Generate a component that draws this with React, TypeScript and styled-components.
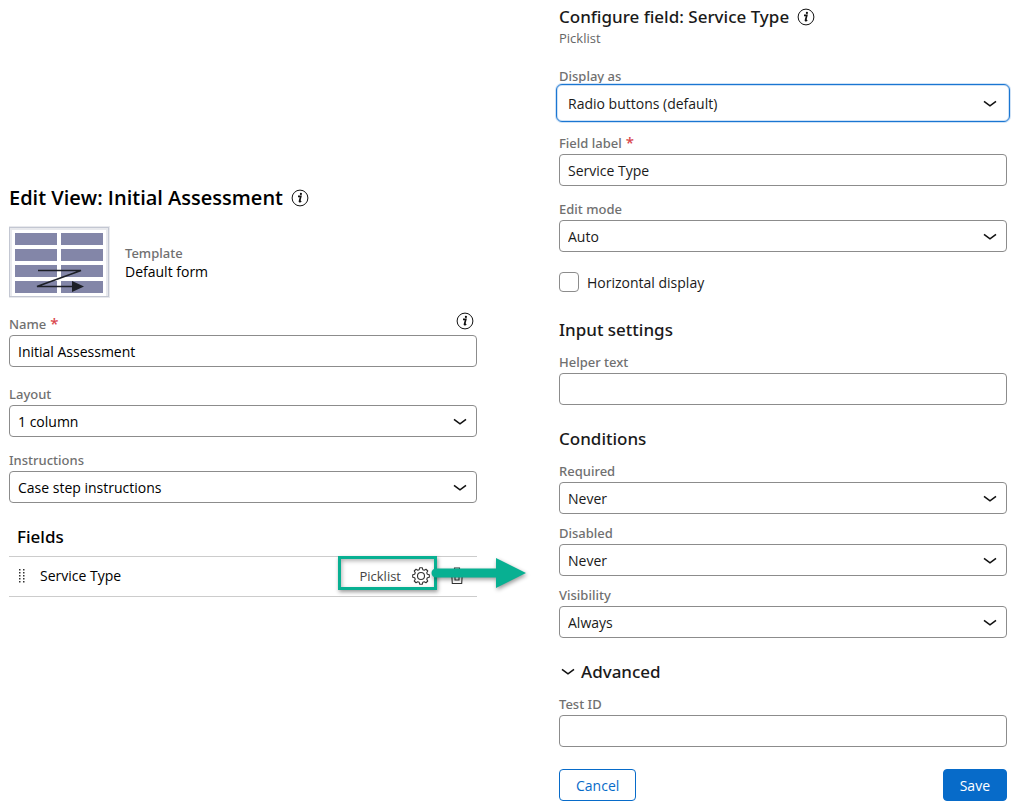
import React, { useId } from "react";
import styled, { createGlobalStyle, css } from "styled-components";

const GlobalStyle = createGlobalStyle`
  *, *::before, *::after { box-sizing: border-box; }
  body {
    margin: 0;
    background: #fff;
    color: #000;
    font-family: "Open Sans", "Noto Sans", sans-serif;
    font-size: 14px;
    line-height: 20px;
  }
  button, input, select { font: inherit; color: inherit; }
  h1, h2, p, ul { margin: 0; padding: 0; }
`;

const Page = styled.main`
  display: grid;
  grid-template-columns: minmax(0, 468fr) minmax(0, 448fr);
  column-gap: 82px;
  align-items: start;
  padding: 5px 11px 5px 9px;
`;

const ViewEditor = styled.section`
  display: flex;
  flex-direction: column;
  padding-top: 180px;
`;

const FieldConfig = styled.form`
  display: flex;
  flex-direction: column;
  color: #1a1a1a;
`;

const TitleRow = styled.div`
  display: flex;
  align-items: center;
  gap: 8px;
`;

const ViewTitle = styled.h1`
  font-size: 20px;
  line-height: 26px;
  font-weight: 600;
`;

const Heading = styled.h2`
  font-family: "Noto Sans", "Open Sans", sans-serif;
  font-size: 17px;
  line-height: 24px;
  font-weight: 500;
`;

const InfoButton = styled.button`
  display: flex;
  padding: 0;
  border: 0;
  background: none;
  color: #111;
`;

const Subtitle = styled.p`
  font-size: 13px;
  line-height: 18px;
  color: #666;
  margin-bottom: 20px;
`;

const Stack = styled.div<{ $gap: number; $top?: number }>`
  display: flex;
  flex-direction: column;
  gap: ${(p) => p.$gap}px;
  margin-top: ${(p) => p.$top ?? 0}px;
`;

const FieldBox = styled.div`
  display: flex;
  flex-direction: column;
  gap: 2px;
`;

const LabelRow = styled.div`
  display: flex;
  align-items: flex-end;
  justify-content: space-between;
  height: 18px;
  padding-right: 3px;

  ${InfoButton} {
    padding-bottom: 3px;
  }
`;

const Label = styled.label`
  font-family: "Noto Sans", "Open Sans", sans-serif;
  font-size: 13px;
  line-height: 18px;
  font-weight: 500;
  color: #707070;
`;

const Required = styled.span`
  font-size: 15px;
  line-height: 1;
  color: #d9464c;
`;

const control = css`
  width: 100%;
  height: 32px;
  padding: 0 8px;
  border: 1px solid #8c8c8c;
  border-radius: 4px;
  background: #fff;
  outline: none;
`;

const TextInput = styled.input`
  ${control}
`;

const SelectWrap = styled.div`
  position: relative;
`;

const Select = styled.select<{ $active?: boolean }>`
  ${control}
  display: block;
  appearance: none;
  padding-top: 2px;
  ${(p) =>
    p.$active &&
    css`
      width: calc(100% + 6px);
      height: 38px;
      margin: -3px;
      padding: 2px 11px 0;
      border-color: #1a76d2;
      border-radius: 6px;
      box-shadow: 0 0 0 1px #cfe2f6, inset 0 0 0 1px #cfe2f6;
    `}
`;

const SelectArrow = styled.span`
  position: absolute;
  right: 10px;
  top: 2px;
  bottom: 0;
  display: flex;
  align-items: center;
  pointer-events: none;
`;

const TemplateRow = styled.div`
  display: flex;
  align-items: center;
  gap: 15px;
  margin-top: 15px;
`;

const TemplateText = styled.div`
  padding-top: 2px;
`;

const TemplateLabel = styled.p`
  font-family: "Noto Sans", "Open Sans", sans-serif;
  font-size: 13px;
  line-height: 18px;
  font-weight: 500;
  color: #707070;
`;

const FieldsHeading = styled(Heading)`
  padding-left: 8px;
  margin: 22px 0 7px;
`;

const FieldList = styled.ul`
  list-style: none;
  border-top: 1px solid #ccc;
`;

const FieldRow = styled.li`
  position: relative;
  display: flex;
  align-items: center;
  height: 40px;
  padding: 0 12px 1px 10px;
  border-bottom: 1px solid #ccc;
`;

const FieldName = styled.span`
  flex: 1;
  padding-left: 15px;
`;

const FieldKind = styled.span`
  font-size: 13px;
  color: #444;
`;

const IconButton = styled.button<{ $left: number }>`
  display: flex;
  padding: 0;
  margin-left: ${(p) => p.$left}px;
  border: 0;
  background: none;
  color: #333;
`;

const Highlight = styled.div`
  position: absolute;
  right: 40px;
  top: -1px;
  width: 99px;
  height: 34px;
  border: 3px solid #08b092;
  box-shadow: 1px 2px 4px rgba(0, 0, 0, 0.4), inset 1px 2px 4px rgba(0, 0, 0, 0.3);
`;

const Arrow = styled.svg`
  position: absolute;
  right: -49px;
  top: -1px;
  filter: drop-shadow(1px 2px 2px rgba(0, 0, 0, 0.4));
`;

const CheckRow = styled.label`
  display: flex;
  align-items: center;
  gap: 8px;
  margin-top: 20px;
`;

const CheckText = styled.span`
  height: 20px;
  line-height: 22px;
`;

const Checkbox = styled.input`
  appearance: none;
  width: 20px;
  height: 20px;
  margin: 0;
  border: 1px solid #8c8c8c;
  border-radius: 4px;
  background: #fff;
`;

const Disclosure = styled.button`
  display: flex;
  align-items: center;
  gap: 6px;
  padding: 0 0 0 2px;
  border: 0;
  background: none;
`;

const Actions = styled.div`
  display: flex;
  justify-content: space-between;
  margin-top: 22px;
`;

const Button = styled.button<{ $primary?: boolean }>`
  height: 32px;
  padding: 2px 16px 0;
  border: 1px solid #076bc9;
  border-radius: 4px;
  background: ${(p) => (p.$primary ? "#076bc9" : "#fff")};
  color: ${(p) => (p.$primary ? "#fff" : "#076bc9")};
`;

const InfoIcon = () => (
  <svg width="18" height="18" viewBox="0 0 18 18" aria-hidden="true">
    <circle cx="9" cy="9" r="7.9" fill="none" stroke="currentColor" strokeWidth="1" />
    <circle cx="9.9" cy="4.9" r="1.1" fill="currentColor" />
    <path d="M7 7.4h2.8L8.500 12.4q0 .8 1.700-.3" fill="none" stroke="currentColor" strokeWidth="1.700" />
  </svg>
);

const Chevron = () => (
  <svg width="14" height="8" viewBox="0 0 14 8" aria-hidden="true">
    <path d="M1 1.400 7 5.800l6-4.400" fill="none" stroke="#111" strokeWidth="1.600" />
  </svg>
);

const GripIcon = () => (
  <svg width="6" height="14" viewBox="0 0 6 14" aria-hidden="true" fill="#333">
    {[0, 3, 6, 9, 12].map((y) => (
      <g key={y}>
        <rect x="0" y={y} width="1.5" height="1.5" />
        <rect x="4" y={y} width="1.5" height="1.5" />
      </g>
    ))}
  </svg>
);

const gearPath = (() => {
  const points: string[] = [];
  const teeth = 8;
  for (let i = 0; i < teeth; i++) {
    const a = (i * 2 * Math.PI) / teeth;
    [[-0.27, 6.6], [-0.15, 8.4], [0.15, 8.4], [0.27, 6.6]].forEach(([d, r]) => {
      points.push(`${(9 + r * Math.sin(a + d)).toFixed(2)} ${(9 - r * Math.cos(a + d)).toFixed(2)}`);
    });
  }
  return `M${points.join("L")}Z`;
})();

const GearIcon = () => (
  <svg width="18" height="18" viewBox="0 0 18 18" aria-hidden="true" fill="none" stroke="currentColor" strokeWidth="1.1" strokeLinejoin="round">
    <path d={gearPath} />
    <circle cx="9" cy="9" r="3.5" />
  </svg>
);

const TrashIcon = () => (
  <svg width="16" height="18" viewBox="0 0 16 18" aria-hidden="true" fill="none" stroke="currentColor" strokeWidth="1.1">
    <path d="M2 3.500h12M5.500 3.500V1h5v2.500M2.500 3.500l.8 13h9.400l.8-13M6 7v6h4V7" />
  </svg>
);

const TemplateThumb = () => (
  <svg width="101" height="72" viewBox="0 0 101 72" aria-hidden="true">
    <rect width="101" height="72" fill="#e8e9ed" />
    <rect x="0.500" y="1.500" width="99" height="69" fill="none" stroke="#c3c7d2" />
    <rect x="3" y="4" width="94" height="66" fill="#fff" />
    {[7, 23, 39, 55].map((y) => (
      <g key={y} fill="#8386a8">
        <rect x="6" y={y} width="42" height="12" />
        <rect x="52" y={y} width="42" height="12" />
      </g>
    ))}
    <path d="M29 44.500h43L28 60.500h36" fill="none" stroke="#1c1f26" strokeWidth="1.500" />
    <path d="M63 55v11l12-5.500z" fill="#1c1f26" />
  </svg>
);

type FieldProps = {
  label: string;
  value?: string;
  required?: boolean;
  select?: boolean;
  active?: boolean;
  info?: boolean;
};

const Field = ({ label, value = "", required, select, active, info }: FieldProps) => {
  const id = useId();
  return (
    <FieldBox>
      <LabelRow>
        <Label htmlFor={id}>
          {label}
          {required && <Required> *</Required>}
        </Label>
        {info && (
          <InfoButton type="button" aria-label={`About ${label}`}>
            <InfoIcon />
          </InfoButton>
        )}
      </LabelRow>
      {select ? (
        <SelectWrap>
          <Select id={id} $active={active}>
            <option>{value}</option>
          </Select>
          <SelectArrow>
            <Chevron />
          </SelectArrow>
        </SelectWrap>
      ) : (
        <TextInput id={id} type="text" defaultValue={value} />
      )}
    </FieldBox>
  );
};

export default function App() {
  return (
    <>
      <GlobalStyle />
      <Page>
        <ViewEditor>
          <TitleRow>
            <ViewTitle>Edit View: Initial Assessment</ViewTitle>
            <InfoButton type="button" aria-label="About this view">
              <InfoIcon />
            </InfoButton>
          </TitleRow>
          <TemplateRow>
            <TemplateThumb />
            <TemplateText>
              <TemplateLabel>Template</TemplateLabel>
              <p>Default form</p>
            </TemplateText>
          </TemplateRow>
          <Stack $gap={18} $top={17}>
            <Field label="Name" value="Initial Assessment" required info />
            <Stack $gap={14}>
              <Field label="Layout" value="1 column" select />
              <Field label="Instructions" value="Case step instructions" select />
            </Stack>
          </Stack>
          <FieldsHeading>Fields</FieldsHeading>
          <FieldList>
            <FieldRow>
              <GripIcon />
              <FieldName>Service Type</FieldName>
              <FieldKind>Picklist</FieldKind>
              <IconButton type="button" aria-label="Configure field" $left={11}>
                <GearIcon />
              </IconButton>
              <IconButton type="button" aria-label="Delete field" $left={19}>
                <TrashIcon />
              </IconButton>
              <Highlight />
              <Arrow width="96" height="34" viewBox="0 0 96 34" aria-hidden="true">
                <path d="M6 12.500H66V2L96 17 66 32V21.500H6a4.500 4.500 0 0 1 0-9z" fill="#08b092" />
              </Arrow>
            </FieldRow>
          </FieldList>
        </ViewEditor>

        <FieldConfig onSubmit={(e) => e.preventDefault()}>
          <TitleRow>
            <Heading>Configure field: Service Type</Heading>
            <InfoButton type="button" aria-label="About this field">
              <InfoIcon />
            </InfoButton>
          </TitleRow>
          <Subtitle>Picklist</Subtitle>
          <Field label="Display as" value="Radio buttons (default)" select active />
          <Stack $gap={14} $top={15}>
            <Field label="Field label" value="Service Type" required />
            <Field label="Edit mode" value="Auto" select />
          </Stack>
          <CheckRow>
            <Checkbox type="checkbox" />
            <CheckText>Horizontal display</CheckText>
          </CheckRow>
          <Stack $gap={11} $top={26}>
            <Heading>Input settings</Heading>
            <Field label="Helper text" />
          </Stack>
          <Stack $gap={11} $top={22}>
            <Heading>Conditions</Heading>
            <Stack $gap={10}>
              <Field label="Required" value="Never" select />
              <Field label="Disabled" value="Never" select />
              <Field label="Visibility" value="Always" select />
            </Stack>
          </Stack>
          <Stack $gap={11} $top={22}>
            <Heading>
              <Disclosure type="button" aria-expanded="true">
                <Chevron />
                Advanced
              </Disclosure>
            </Heading>
            <Field label="Test ID" />
          </Stack>
          <Actions>
            <Button type="button">Cancel</Button>
            <Button type="submit" $primary>
              Save
            </Button>
          </Actions>
        </FieldConfig>
      </Page>
    </>
  );
}
